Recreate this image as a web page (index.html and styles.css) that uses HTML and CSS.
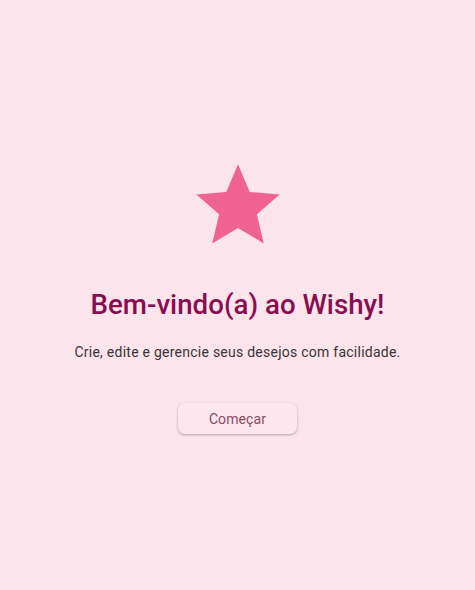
FILE: index.html
```html
<!DOCTYPE html>
<html lang="pt">
<head>
<meta charset="utf-8">
<link rel="stylesheet" href="styles.css">
<title>Wishy</title>
</head>
<body>
<main class="screen">
  <svg class="star" viewBox="0 0 24 24" aria-hidden="true"><path d="M12 17.27L18.18 21l-1.64-7.03L22 9.24l-7.19-.61L12 2 9.19 8.63 2 9.24l5.46 4.73L5.82 21z"/></svg>
  <h1 class="title">Bem-vindo(a) ao Wishy!</h1>
  <p class="subtitle">Crie, edite e gerencie seus desejos com facilidade.</p>
  <button class="start">Começar</button>
</main>
</body>
</html>
```
FILE: styles.css
```css
html, body {
  margin: 0;
  height: 100%;
  background: #fce4ec;
}
body {
  font-family: Roboto, "Noto Sans", sans-serif;
}
.screen {
  height: 100%;
  display: flex;
  flex-direction: column;
  align-items: center;
  justify-content: center;
}
.star {
  width: 100px;
  height: 100px;
  fill: #f06292;
}
.title {
  margin: 31px 0 0;
  font-size: 27.7px;
  font-weight: 500;
  color: #880e4f;
  line-height: 36px;
}
.subtitle {
  margin: 19px 0 0;
  font-size: 14px;
  letter-spacing: 0.25px;
  line-height: 20px;
  color: #3a3335;
}
.start {
  margin-top: 41px;
  height: 31px;
  padding: 0 31px;
  border: none;
  border-radius: 7px;
  background: #fde6ee;
  color: #8e4a5f;
  font-family: Roboto, sans-serif;
  font-size: 14px;
  font-weight: 400;
  letter-spacing: 0.1px;
  box-shadow: 0 1px 2px rgba(0,0,0,0.22), 0 1px 3px 1px rgba(0,0,0,0.06);
}
```
